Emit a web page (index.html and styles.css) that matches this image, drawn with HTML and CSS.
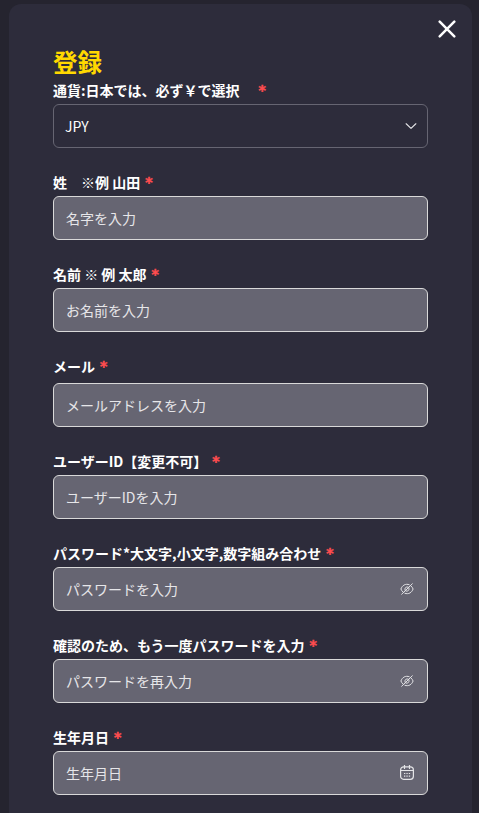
FILE: index.html
```html
<!DOCTYPE html>
<html lang="ja">
<head>
<meta charset="utf-8">
<title>登録</title>
<link rel="stylesheet" href="styles.css">
</head>
<body>
<main class="modal">
  <header class="modal-top">
    <svg class="close" viewBox="0 0 18 18"><path d="M1.7 1.7 16.3 16.3M16.3 1.7 1.7 16.3"/></svg>
  </header>
  <h1>登録</h1>
  <form class="form">
    <div class="field">
      <div class="label">通貨:日本では、必ず￥で選択　<span class="required">*</span></div>
      <div class="control select"><span>JPY</span><svg class="chevron" viewBox="0 0 12 7"><path d="M.8.8 6 5.8 11.2.8"/></svg></div>
    </div>
    <div class="field">
      <div class="label">姓　※例 山田<span class="required">*</span></div>
      <div class="control">名字を入力</div>
    </div>
    <div class="field">
      <div class="label">名前 ※ 例 太郎<span class="required">*</span></div>
      <div class="control">お名前を入力</div>
    </div>
    <div class="field field-mail">
      <div class="label">メール<span class="required">*</span></div>
      <div class="control">メールアドレスを入力</div>
    </div>
    <div class="field">
      <div class="label">ユーザーID【変更不可】<span class="required">*</span></div>
      <div class="control">ユーザーIDを入力</div>
    </div>
    <div class="field">
      <div class="label">パスワード*大文字,小文字,数字組み合わせ<span class="required">*</span></div>
      <div class="control"><span>パスワードを入力</span><svg class="eye" viewBox="0 0 14 12"><path d="M9.2 1.7C5.4.2 2.2 2.5.9 6c.5 1.2 1.1 2.1 2 2.9M4.9 10.3C8.8 11.7 11.8 9.5 13.1 6c-.5-1.2-1.1-2.1-2-2.9M1.7 11.2 12.3.8M5 7.1C4.3 5 6.1 3.3 8.1 4M9 5c.6 2-1 3.7-3 3.1"/></svg></div>
    </div>
    <div class="field">
      <div class="label">確認のため、もう一度パスワードを入力<span class="required">*</span></div>
      <div class="control"><span>パスワードを再入力</span><svg class="eye" viewBox="0 0 14 12"><path d="M9.2 1.7C5.4.2 2.2 2.5.9 6c.5 1.2 1.1 2.1 2 2.9M4.9 10.3C8.8 11.7 11.8 9.5 13.1 6c-.5-1.2-1.1-2.1-2-2.9M1.7 11.2 12.3.8M5 7.1C4.3 5 6.1 3.3 8.1 4M9 5c.6 2-1 3.7-3 3.1"/></svg></div>
    </div>
    <div class="field">
      <div class="label">生年月日<span class="required">*</span></div>
      <div class="control"><span>生年月日</span><svg class="calendar" viewBox="0 0 14 15"><rect x=".6" y="1.9" width="12.8" height="12.4" rx="3"/><path d="M.6 5.5h12.8M4.5.2v3.2M9.5.2v3.2"/><path class="days" d="M4 8.5h1.3M6.4 8.5h1.3M8.8 8.5h1.3M4 11.1h1.3M6.4 11.1h1.3M8.8 11.1h1.3"/></svg></div>
    </div>
  </form>
</main>
</body>
</html>
```
FILE: styles.css
```css
* {
  box-sizing: border-box;
}

body {
  margin: 0;
  height: 813px;
  overflow: hidden;
  padding: 4px 7px 0 9px;
  background: #25242f;
  color: #fff;
  font: 14px/20px "Noto Sans CJK JP", sans-serif;
}

.modal {
  height: 820px;
  padding: 0 44px;
  border-radius: 12px;
  background: #2d2c3b;
}

.modal-top {
  display: flex;
  justify-content: flex-end;
  height: 40px;
  margin-right: -28px;
  padding-top: 16px;
}

svg {
  display: block;
  flex: none;
  fill: none;
  stroke: #e4e4e7;
  stroke-linecap: round;
  stroke-linejoin: round;
}

.close {
  width: 18px;
  height: 18px;
  stroke: #fff;
  stroke-width: 2.5;
}

h1 {
  margin: 0;
  color: #ffd800;
  font-size: 24.5px;
  line-height: 36px;
  font-weight: 700;
}

.form {
  display: flex;
  flex-direction: column;
  gap: 24px;
}

.field {
  display: flex;
  flex-direction: column;
  gap: 4px;
}

.field-mail {
  gap: 7px;
}

.label {
  height: 20px;
  white-space: pre;
  font-weight: 700;
}

.required {
  display: inline-block;
  height: 14px;
  margin-left: 5px;
  color: #ff4d4f;
  font: 700 14px/14px "DejaVu Sans", sans-serif;
  -webkit-text-stroke: 0.5px #ff4d4f;
  vertical-align: 1px;
}

.control {
  display: flex;
  align-items: center;
  justify-content: space-between;
  height: 44px;
  padding: 0 13px 0 12px;
  border: 1px solid #d9d9d9;
  border-radius: 6px;
  background: #666572;
  color: #e6e6e9;
}

.select {
  padding: 0 10px 0 11px;
  border-color: #666572;
  background: transparent;
  color: #fff;
}

.chevron {
  width: 12px;
  height: 6.5px;
  stroke-width: 1.2;
}

.eye {
  width: 14px;
  height: 12px;
  stroke-width: 1;
}

.calendar {
  width: 14px;
  height: 15px;
  margin-bottom: 2px;
  stroke-width: 1.2;
}

.days {
  stroke-linecap: butt;
}
```
